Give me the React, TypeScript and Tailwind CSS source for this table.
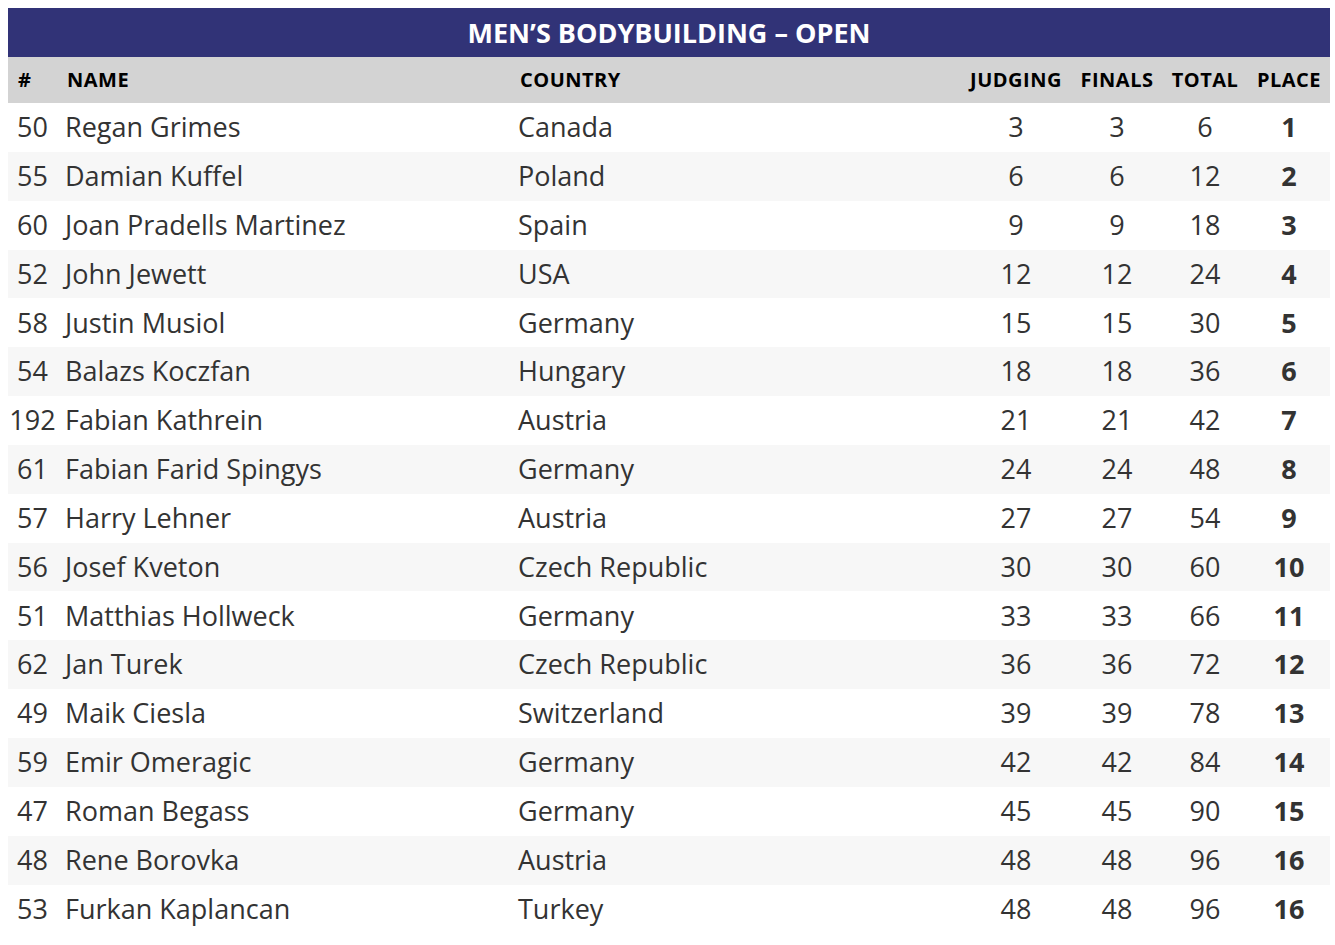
import React from "react";

const rows: [string, string, string, number, number, number, number][] = [
  ["50", "Regan Grimes", "Canada", 3, 3, 6, 1],
  ["55", "Damian Kuffel", "Poland", 6, 6, 12, 2],
  ["60", "Joan Pradells Martinez", "Spain", 9, 9, 18, 3],
  ["52", "John Jewett", "USA", 12, 12, 24, 4],
  ["58", "Justin Musiol", "Germany", 15, 15, 30, 5],
  ["54", "Balazs Koczfan", "Hungary", 18, 18, 36, 6],
  ["192", "Fabian Kathrein", "Austria", 21, 21, 42, 7],
  ["61", "Fabian Farid Spingys", "Germany", 24, 24, 48, 8],
  ["57", "Harry Lehner", "Austria", 27, 27, 54, 9],
  ["56", "Josef Kveton", "Czech Republic", 30, 30, 60, 10],
  ["51", "Matthias Hollweck", "Germany", 33, 33, 66, 11],
  ["62", "Jan Turek", "Czech Republic", 36, 36, 72, 12],
  ["49", "Maik Ciesla", "Switzerland", 39, 39, 78, 13],
  ["59", "Emir Omeragic", "Germany", 42, 42, 84, 14],
  ["47", "Roman Begass", "Germany", 45, 45, 90, 15],
  ["48", "Rene Borovka", "Austria", 48, 48, 96, 16],
  ["53", "Furkan Kaplancan", "Turkey", 48, 48, 96, 16],
];

const cols = "grid grid-cols-[49px_453fr_450fr_112px_90px_86px_82px]";

export default function App() {
  return (
    <div className="bg-white pl-2 pr-[5px] py-2 font-['Open_Sans',sans-serif]">
      <div className="h-[49px] bg-[#313377] flex items-center justify-center text-white font-bold text-[27px] leading-none">
        MEN’S BODYBUILDING – OPEN
      </div>
      <div className={`${cols} h-[46px] items-center bg-[#d3d3d3] text-black font-bold text-[20px] tracking-[0.5px]`}>
        <div className="pl-[10px]">#</div>
        <div className="pl-[10px]">NAME</div>
        <div className="pl-[10px]">COUNTRY</div>
        <div className="text-center">JUDGING</div>
        <div className="text-center">FINALS</div>
        <div className="text-center">TOTAL</div>
        <div className="text-center">PLACE</div>
      </div>
      {rows.map((r, i) => (
        <div
          key={i}
          className={`${cols} h-[48.85px] items-center text-[27px] text-[#333333] ${i % 2 === 1 ? "bg-[#f7f7f7]" : "bg-white"}`}
        >
          <div className="text-center">{r[0]}</div>
          <div className="pl-[8px] whitespace-nowrap">{r[1]}</div>
          <div className="pl-[8px] whitespace-nowrap">{r[2]}</div>
          <div className="text-center">{r[3]}</div>
          <div className="text-center">{r[4]}</div>
          <div className="text-center">{r[5]}</div>
          <div className="text-center font-bold">{r[6]}</div>
        </div>
      ))}
    </div>
  );
}
